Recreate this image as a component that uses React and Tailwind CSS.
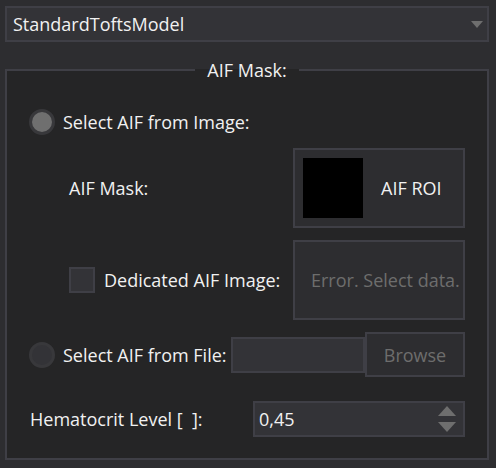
import React from "react";

const font = { fontFamily: '"Open Sans", "Noto Sans", sans-serif' };

function Radio({ checked }) {
  return (
    <span className="flex h-[26px] w-[26px] shrink-0 items-center justify-center rounded-full border-[3px] border-[#38383b] bg-[#333337]">
      {checked && <span className="h-[20px] w-[20px] rounded-full bg-[#6f6f6f]" />}
    </span>
  );
}

export default function App() {
  return (
    <div
      className="flex h-[468px] w-[496px] flex-col bg-[#2d2d30] pl-[5px] pr-[7px] pt-[6px] text-[18px] leading-[24px] text-[#f1f1f1]"
      style={font}
    >
      {/* model combo */}
      <div className="flex h-[36px] items-center justify-between border-2 border-[#3f3f46] bg-[#333337] pl-[6px] pr-[4px]">
        <span>StandardToftsModel</span>
        <svg width="12" height="7" viewBox="0 0 12 7">
          <path d="M0 0 H12 L6 7 Z" fill="#6e6e6e" />
        </svg>
      </div>

      {/* AIF group */}
      <fieldset className="mt-[18px] flex flex-col border-2 border-[#3f3f46] bg-[#252526] px-[22px] pb-[21px]">
        <legend className="mx-auto h-[20px] px-[12px] leading-[20px]">AIF Mask:</legend>

        <div className="mt-[29px] flex h-[26px] items-center gap-[8px]">
          <Radio checked />
          <span>Select AIF from Image:</span>
        </div>

        <div className="mt-[13px] flex h-[80px] items-center justify-between pl-[40px]">
          <span>AIF Mask:</span>
          <div className="flex h-[80px] w-[172px] items-center border-2 border-[#3f3f46] bg-[#2d2d30] pl-[8px]">
            <div className="h-[60px] w-[60px] bg-black" />
            <span className="ml-[18px]">AIF ROI</span>
          </div>
        </div>

        <div className="mt-[12px] flex h-[80px] items-center justify-between pl-[40px]">
          <div className="flex items-center gap-[9px]">
            <span className="h-[26px] w-[26px] border-2 border-[#3f3f46] bg-[#333337]" />
            <span>Dedicated AIF Image:</span>
          </div>
          <div className="flex h-[80px] w-[172px] items-center overflow-hidden whitespace-nowrap border-2 border-[#3f3f46] bg-[#2d2d30] pl-[16px] text-[#6d6d6d]">
            Error. Select data.
          </div>
        </div>

        <div className="mt-[12px] flex h-[45px] items-center">
          <Radio />
          <span className="ml-[8px]">Select AIF from File:</span>
          <div className="ml-auto h-[36px] w-[134px] border-2 border-[#3f3f46] bg-[#333337]" />
          <div className="flex h-[45px] w-[100px] items-center justify-center border-2 border-[#3f3f46] bg-[#2d2d30] text-[#6d6d6d]">
            Browse
          </div>
        </div>

        <div className="mt-[24px] flex h-[36px] items-center justify-between pl-[1px]">
          <span>Hematocrit Level [&nbsp;&nbsp;]:</span>
          <div className="flex h-[36px] w-[212px] items-center justify-between border-2 border-[#3f3f46] bg-[#333337] pl-[4px] pr-[7px]">
            <span>0,45</span>
            <svg width="18" height="26" viewBox="0 0 18 26">
              <path d="M0 10 L9 0 L18 10 Z" fill="#6e6e6e" />
              <path d="M0 16 H18 L9 26 Z" fill="#6e6e6e" />
            </svg>
          </div>
        </div>
      </fieldset>
    </div>
  );
}
